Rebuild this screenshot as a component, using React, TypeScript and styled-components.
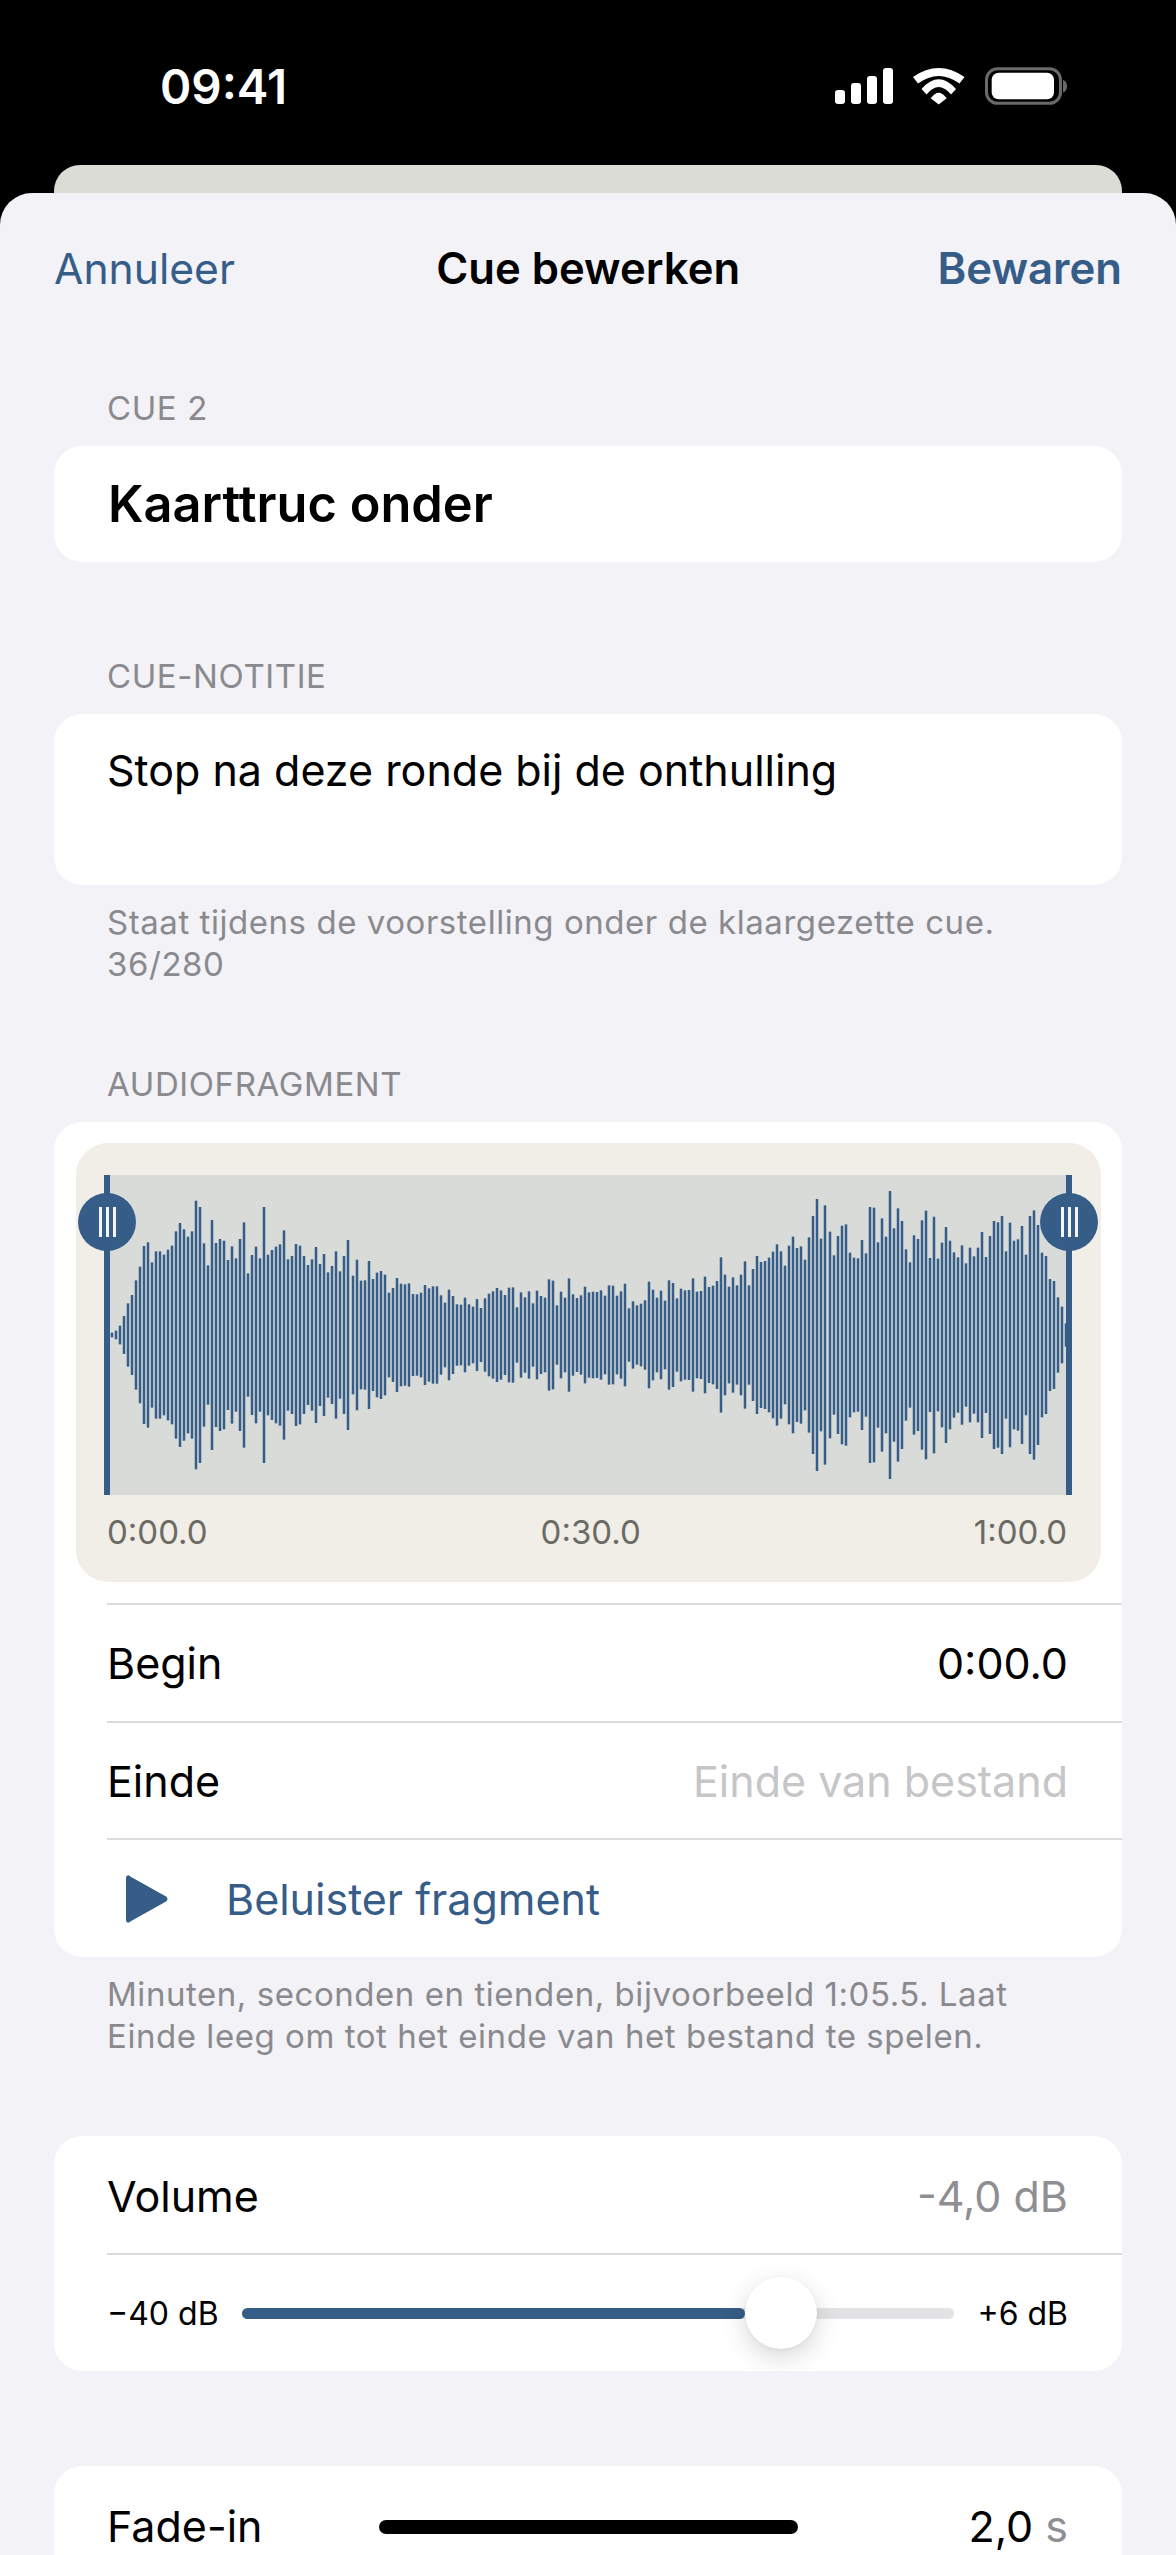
import styled, { createGlobalStyle } from 'styled-components';

const BLUE = '#365c88';

const GlobalStyle = createGlobalStyle`
    html, body {
        margin: 0;
        padding: 0;
        background: #000;
    }
    * {
        box-sizing: border-box;
    }
`;

const Phone = styled.div`
    width: 1176px;
    height: 2555px;
    position: relative;
    overflow: hidden;
    background: #000;
    font-family: Inter, "Liberation Sans", sans-serif;
    color: #000;
`;

const StatusBar = styled.div`
    height: 165px;
    padding: 7px 108px 0 160px;
    display: flex;
    align-items: center;
    justify-content: space-between;
    color: #fff;
`;

const Clock = styled.div`
    font-size: 47.5px;
    font-weight: 600;
`;

const BackCard = styled.div`
    height: 28px;
    margin: 0 54px;
    background: #dcdcd7;
    border-radius: 26px 26px 0 0;
`;

const Sheet = styled.div`
    height: 2362px;
    background: #f2f2f7;
    border-radius: 32px 32px 0 0;
    padding: 0 54px;
`;

const Nav = styled.div`
    height: 150px;
    display: flex;
    align-items: center;
    justify-content: space-between;
`;

const NavButton = styled.div<{ $bold?: boolean }>`
    font-size: ${(p) => (p.$bold ? 43.7 : 42.6)}px;
    font-weight: ${(p) => (p.$bold ? 600 : 400)};
    color: ${BLUE};
`;

const NavTitle = styled.div`
    font-size: 43.6px;
    font-weight: 600;
    margin-left: 4px;
`;

const SectionLabel = styled.div<{ $top: number }>`
    margin: ${(p) => p.$top}px 0 18px;
    padding-left: 53px;
    height: 40px;
    line-height: 40px;
    font-size: 33px;
    letter-spacing: 0.6px;
    color: #8a8a8e;
`;

const Card = styled.div<{ $top?: number }>`
    margin-top: ${(p) => p.$top ?? 0}px;
    background: #fff;
    border-radius: 28px;
    overflow: hidden;
`;

const NameField = styled.div`
    height: 116px;
    padding: 0 54px 2px;
    display: flex;
    align-items: center;
    font-size: 50.5px;
    font-weight: 600;
`;

const NoteField = styled.div`
    height: 171px;
    padding: 31px 53px 0;
    font-size: 43px;
    line-height: 50px;
`;

const Footnote = styled.div`
    margin-top: 16px;
    padding: 0 53px;
    font-size: 33px;
    letter-spacing: 0.55px;
    line-height: 42px;
    color: #8a8a8e;
`;

const WavePanel = styled.div`
    margin: 21px 21px 21px 22px;
    height: 439px;
    padding: 32px 29px 0 28px;
    background: #f0eee7;
    border-radius: 32px;
`;

const WaveArea = styled.div`
    height: 320px;
    background: #d9dbd8;
    position: relative;
`;

const WaveSvg = styled.svg`
    display: block;
`;

const HandleLine = styled.div<{ $side: 'left' | 'right' }>`
    position: absolute;
    top: 0;
    bottom: 0;
    width: 6px;
    ${(p) => p.$side}: 0;
    background: ${BLUE};
`;

const HandleKnob = styled.div<{ $side: 'left' | 'right' }>`
    position: absolute;
    top: 18px;
    ${(p) => p.$side}: -26px;
    width: 58px;
    height: 58px;
    border-radius: 50%;
    background: ${BLUE};
    display: flex;
    align-items: center;
    justify-content: center;
    gap: 4px;
`;

const Grip = styled.span`
    width: 3px;
    height: 30px;
    background: #f4f4f4;
`;

const TimeScale = styled.div`
    margin-top: 17px;
    padding: 0 5px 0 3px;
    display: flex;
    justify-content: space-between;
    font-size: 33px;
    line-height: 40px;
    color: #6b6a64;
`;

const Row = styled.div<{ $height: number }>`
    height: ${(p) => p.$height}px;
    margin-left: 53px;
    padding-right: 54px;
    border-top: 2px solid #dcdcde;
    display: flex;
    align-items: center;
    justify-content: space-between;
    font-size: 43px;
`;

const FirstRow = styled(Row)`
    border-top: 0;
    padding-top: 2px;
`;

const RowValue = styled.div<{ $tone?: 'muted' | 'faint' }>`
    color: ${(p) => (p.$tone === 'muted' ? '#8e8e93' : p.$tone === 'faint' ? '#c6c6c8' : '#000')};
`;

const ListenLabel = styled.div`
    color: ${BLUE};
    display: flex;
    align-items: center;
    gap: 58px;
    padding-left: 19px;
`;

const SliderRow = styled(Row)`
    justify-content: flex-start;
`;

const SliderEnd = styled.div<{ $right?: boolean }>`
    font-size: 32px;
    ${(p) => (p.$right ? 'flex: 1; text-align: right;' : 'width: 135px;')}
`;

const Track = styled.div`
    width: 712px;
    height: 11px;
    border-radius: 6px;
    background: #e3e3e5;
    position: relative;
`;

const TrackFill = styled.div`
    height: 100%;
    border-radius: 6px;
    background: ${BLUE};
`;

const Thumb = styled.div<{ $at: number }>`
    position: absolute;
    top: -31px;
    left: ${(p) => p.$at}px;
    width: 72px;
    height: 72px;
    border-radius: 50%;
    background: #fff;
    box-shadow: 0 8px 26px rgba(0, 0, 0, 0.16), 0 1px 3px rgba(0, 0, 0, 0.06);
`;

const HomeBar = styled.div`
    position: absolute;
    left: 379px;
    top: 2520px;
    width: 419px;
    height: 14px;
    border-radius: 7px;
    background: #000;
`;

const Unit = styled.span`
    color: #8e8e93;
`;

// half-height tops of each waveform bar, read off the picture (centre line = 675)
const TOPS = [
    668, 662, 647, 618, 580, 555, 511, 470, 408, 397, 457, 424, 424, 434, 419, 407, 364, 339, 358, 380,
    364, 272, 291, 400, 466, 330, 399, 387, 392, 450, 409, 445, 387, 337, 490, 435, 410, 445, 291, 434,
    420, 410, 403, 361, 448, 438, 402, 407, 438, 465, 448, 411, 462, 432, 487, 468, 424, 484, 438, 390,
    497, 449, 512, 511, 453, 507, 488, 483, 494, 548, 534, 504, 521, 523, 520, 552, 553, 548, 525, 535,
    529, 529, 556, 578, 539, 558, 583, 584, 563, 583, 590, 567, 594, 565, 551, 544, 534, 541, 555, 533,
    532, 592, 547, 562, 544, 580, 542, 558, 563, 508, 512, 586, 545, 563, 505, 553, 564, 556, 530, 547,
    545, 546, 541, 557, 526, 527, 557, 544, 521, 595, 574, 586, 581, 571, 515, 539, 563, 542, 572, 511,
    519, 565, 536, 541, 540, 505, 545, 543, 500, 531, 527, 513, 442, 494, 530, 502, 526, 494, 454, 526,
    477, 438, 456, 453, 443, 425, 403, 424, 467, 407, 380, 414, 409, 449, 382, 318, 267, 386, 286, 365,
    436, 378, 347, 343, 428, 443, 445, 390, 430, 291, 293, 397, 325, 380, 243, 355, 295, 333, 418, 457,
    376, 387, 331, 302, 444, 320, 446, 398, 351, 392, 427, 442, 406, 460, 413, 439, 413, 366, 441, 378,
    333, 337, 318, 424, 338, 392, 388, 348, 434, 318, 301, 345, 428, 438, 507, 513, 562, 590, 640,
];

function Waveform() {
    const first = 8;
    const last = 962;
    const step = (last - first) / (TOPS.length - 1);
    return (
        <WaveSvg width="968" height="320" viewBox="0 0 968 320">
            {TOPS.map((top, i) => {
                const half = (675 - top) / 3;
                return <rect key={i} x={Math.round(first + i * step) - 1.25} y={160 - half} width="2.5" height={half * 2} fill={BLUE} />;
            })}
        </WaveSvg>
    );
}

function StatusIcons() {
    return (
        <svg width="236" height="40" viewBox="0 0 236 40" fill="#fff">
            <rect x="3" y="24" width="10" height="14" rx="3" />
            <rect x="19" y="17" width="10" height="21" rx="3" />
            <rect x="35" y="10" width="10" height="28" rx="3" />
            <rect x="51" y="2" width="10" height="36" rx="3" />
            <path d="M81 11Q106.700 -7 132.500 11L127.500 17.500Q106.700 2.500 86 17.500Z" />
            <path d="M89.500 23Q106.700 3.600 124 23L119 28.500Q106.700 13.500 94.500 28.500Z" />
            <path d="M98.700 32.300Q106.700 21 114.700 32.300L106.700 38.500Z" />
            <rect x="154.500" y="2.800" width="74" height="34.500" rx="11" fill="none" stroke="#6a6a6a" strokeWidth="3" />
            <rect x="159.700" y="6.700" width="62.300" height="26.600" rx="7" />
            <path d="M231 14c2.500.8 4 3 4 6.300s-1.500 5.500-4 6.300z" fill="#6a6a6a" />
        </svg>
    );
}

function PlayIcon() {
    return (
        <svg width="42" height="48" viewBox="0 0 42 48" fill={BLUE}>
            <path d="M0 3c0-2.600 2.600-3.600 4.300-1.600L40.500 21.800c1.300 1.400 1.300 3 0 4.400L4.300 46.600C2.600 48.600 0 47.600 0 45z" />
        </svg>
    );
}

export default function App() {
    return (
        <Phone>
            <GlobalStyle />
            <StatusBar>
                <Clock>09:41</Clock>
                <StatusIcons />
            </StatusBar>
            <BackCard />
            <Sheet>
                <Nav>
                    <NavButton>Annuleer</NavButton>
                    <NavTitle>Cue bewerken</NavTitle>
                    <NavButton $bold>Bewaren</NavButton>
                </Nav>

                <SectionLabel $top={45}>CUE 2</SectionLabel>
                <Card>
                    <NameField>Kaarttruc onder</NameField>
                </Card>

                <SectionLabel $top={94}>CUE-NOTITIE</SectionLabel>
                <Card>
                    <NoteField>Stop na deze ronde bij de onthulling</NoteField>
                </Card>
                <Footnote>
                    Staat tijdens de voorstelling onder de klaargezette cue.
                    <br />
                    36/280
                </Footnote>

                <SectionLabel $top={79}>AUDIOFRAGMENT</SectionLabel>
                <Card>
                    <WavePanel>
                        <WaveArea>
                            <Waveform />
                            <HandleLine $side="left" />
                            <HandleKnob $side="left">
                                <Grip />
                                <Grip />
                                <Grip />
                            </HandleKnob>
                            <HandleLine $side="right" />
                            <HandleKnob $side="right">
                                <Grip />
                                <Grip />
                                <Grip />
                            </HandleKnob>
                        </WaveArea>
                        <TimeScale>
                            <span>0:00.0</span>
                            <span>0:30.0</span>
                            <span>1:00.0</span>
                        </TimeScale>
                    </WavePanel>
                    <Row $height={118}>
                        <span>Begin</span>
                        <RowValue>0:00.0</RowValue>
                    </Row>
                    <Row $height={117}>
                        <span>Einde</span>
                        <RowValue $tone="faint">Einde van bestand</RowValue>
                    </Row>
                    <Row $height={119}>
                        <ListenLabel>
                            <PlayIcon />
                            Beluister fragment
                        </ListenLabel>
                    </Row>
                </Card>
                <Footnote>
                    Minuten, seconden en tienden, bijvoorbeeld 1:05.5. Laat
                    <br />
                    Einde leeg om tot het einde van het bestand te spelen.
                </Footnote>

                <Card $top={79}>
                    <FirstRow $height={117}>
                        <span>Volume</span>
                        <RowValue $tone="muted">-4,0 dB</RowValue>
                    </FirstRow>
                    <SliderRow $height={118}>
                        <SliderEnd>−40 dB</SliderEnd>
                        <Track>
                            <TrackFill style={{ width: `${(503 / 712) * 100}%` }} />
                            <Thumb $at={503} />
                        </Track>
                        <SliderEnd $right>+6 dB</SliderEnd>
                    </SliderRow>
                </Card>

                <Card $top={95}>
                    <FirstRow $height={118}>
                        <span>Fade-in</span>
                        <RowValue>
                            2,0 <Unit>s</Unit>
                        </RowValue>
                    </FirstRow>
                </Card>
            </Sheet>
            <HomeBar />
        </Phone>
    );
}
